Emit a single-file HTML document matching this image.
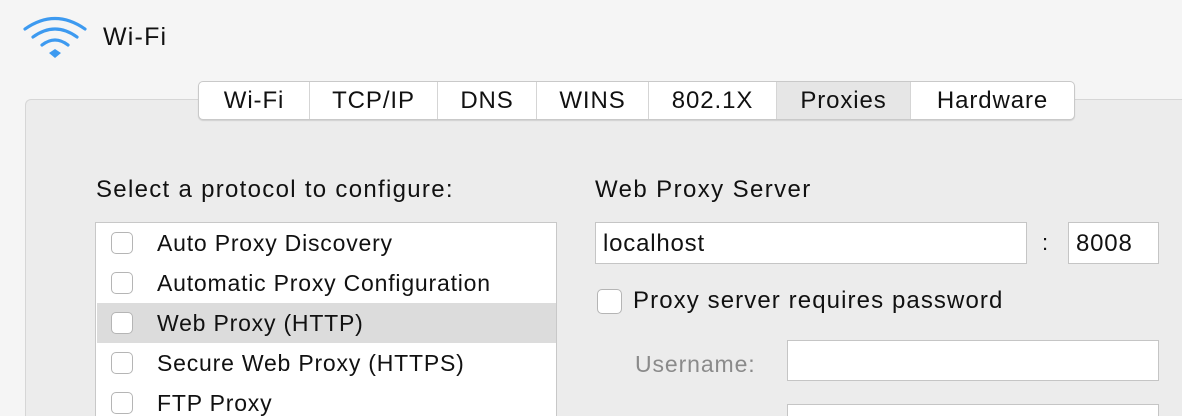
<!DOCTYPE html>
<html style="height:416px;overflow:hidden"><head><style>
body{margin:0;width:1182px;height:416px;background:#f5f5f5;font-family:"Liberation Sans",Arial,sans-serif;color:#111;position:relative;overflow:hidden;letter-spacing:1.1px}
.a{position:absolute}
.panel{left:25px;top:99px;width:1157px;height:317px;background:#ececec;border:1px solid #d6d6d6;border-bottom:none;border-right:none;border-radius:6px 0 0 0;box-sizing:border-box}
.tabs{left:198px;top:81px;height:37px;width:875px;background:#fff;border:1px solid #c9c9c9;border-radius:5px;display:flex;box-shadow:0 1px 1px rgba(0,0,0,.12);overflow:hidden}
.tabs div{height:37px;line-height:38px;text-align:center;font-size:24px;border-right:1px solid #d5d5d5;box-sizing:border-box;letter-spacing:0.9px}
.tabs div:last-child{border:none}
.list{left:95px;top:222px;width:462px;height:194px;background:#fff;border:1px solid #c8c8c8;border-bottom:none;box-sizing:border-box;overflow:hidden}
.row{position:absolute;left:0;width:460px;height:40px;font-size:23px;line-height:40px;letter-spacing:0.8px}
.row span{position:absolute;left:61px}
.cb{position:absolute;width:22px;height:22px;border:1px solid #b5b5b5;border-radius:5px;background:#fff;box-sizing:border-box}
.row .cb{left:15px;top:9px}
.inp{background:#fff;border:1px solid #c5c5c5;box-sizing:border-box;font-size:24px;line-height:42px;padding-left:7px;letter-spacing:0.8px}
</style></head><body>
<svg class="a" style="left:22px;top:14px" width="66" height="48" viewBox="0 0 66 48">
<g fill="none" stroke="#3d9af0" stroke-width="3.2" stroke-linecap="round">
<path d="M3 15 Q33 -6 63 15"/><path d="M11 23 Q33 7 55 23"/><path d="M20 31 Q33 21 46 31"/></g>
<path d="M27 39 L33 35 L39 39 L33 44 Z" fill="#3d9af0"/></svg>
<div class="a" style="left:103px;top:23px;font-size:25px;letter-spacing:1.2px">Wi-Fi</div>
<div class="a panel"></div>
<div class="a tabs">
<div style="width:111px">Wi-Fi</div><div style="width:128px">TCP/IP</div><div style="width:99px">DNS</div><div style="width:112px">WINS</div><div style="width:128px">802.1X</div><div style="width:134px;background:#e6e6e6">Proxies</div><div style="width:163px">Hardware</div></div>
<div class="a" style="left:96px;top:176px;font-size:24px;letter-spacing:1.3px">Select a protocol to configure:</div>
<div class="a list">
<div class="row" style="top:0"><div class="cb"></div><span>Auto Proxy Discovery</span></div>
<div class="row" style="top:40px"><div class="cb"></div><span>Automatic Proxy Configuration</span></div>
<div class="row" style="top:80px;background:#dcdcdc;left:1px"><div class="cb" style="left:14px"></div><span style="left:60px">Web Proxy (HTTP)</span></div>
<div class="row" style="top:120px"><div class="cb"></div><span>Secure Web Proxy (HTTPS)</span></div>
<div class="row" style="top:160px"><div class="cb"></div><span>FTP Proxy</span></div>
</div>
<div class="a" style="left:595px;top:176px;font-size:24px;letter-spacing:1.4px">Web Proxy Server</div>
<div class="a inp" style="left:595px;top:222px;width:432px;height:42px">localhost</div>
<div class="a" style="left:1042px;top:230px;font-size:22px">:</div>
<div class="a inp" style="left:1068px;top:222px;width:91px;height:42px">8008</div>
<div class="a cb" style="left:597px;top:289px;width:25px;height:25px"></div>
<div class="a" style="left:633px;top:287px;font-size:24px;letter-spacing:1.1px">Proxy server requires password</div>
<div class="a" style="left:635px;top:351px;font-size:23px;color:#8a8a8a;letter-spacing:0.9px">Username:</div>
<div class="a inp" style="left:787px;top:340px;width:372px;height:41px"></div>
<div class="a inp" style="left:787px;top:404px;width:372px;height:12px;border-bottom:none"></div>
</body></html>
